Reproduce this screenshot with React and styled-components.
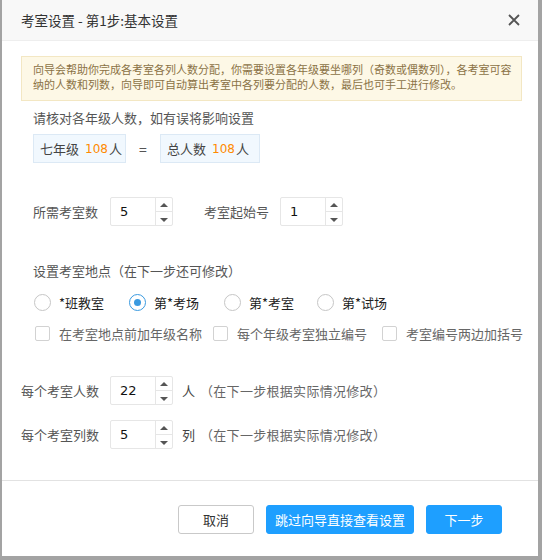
import React, { useState } from 'react';
import styled, { createGlobalStyle, css } from 'styled-components';

const GlobalStyle = createGlobalStyle`
  html, body {
    margin: 0;
    padding: 0;
    background: #a3a3a3;
  }
  body {
    font-family: "Microsoft YaHei", "Noto Sans CJK SC", "Noto Sans", sans-serif;
    color: #333;
  }
`;

const Dialog = styled.div`
  margin-left: 2px;
  width: 536px;
  height: 556px;
  background: #fff;
  display: flex;
  flex-direction: column;
  box-sizing: border-box;
`;

const Header = styled.div`
  height: 41px;
  flex: none;
  box-sizing: border-box;
  display: flex;
  align-items: center;
  justify-content: space-between;
  padding: 0 12px 0 19px;
  background: #f8f8f8;
  border-bottom: 1px solid #eee;
  font-size: 13.5px;
  color: #333;
`;

const CloseButton = styled.button`
  width: 24px;
  height: 24px;
  border: none;
  background: none;
  padding: 0;
  display: flex;
  align-items: center;
  justify-content: center;
  cursor: pointer;
`;

const Body = styled.div`
  flex: 1;
  padding: 15px 16px 0 19px;
  border-bottom: 1px solid #e2e2e2;
`;

const Notice = styled.div`
  box-sizing: border-box;
  height: 45px;
  padding: 5px 4px 0 11px;
  background: #fdf8e6;
  border: 1px solid #f3e7c3;
  font-size: 11px;
  line-height: 15px;
  color: #8b7245;
`;

const Section = styled.div`
  padding-left: ${p => p.indent ?? 12}px;
  margin-top: ${p => p.gap || 0}px;
`;

const Caption = styled.div`
  font-size: 13px;
  line-height: 18px;
  color: #555;
`;

const GradeRow = styled.div`
  display: flex;
  align-items: center;
  margin-top: 7px;
`;

const GradeBox = styled.div`
  box-sizing: border-box;
  height: 29px;
  width: ${p => p.width}px;
  padding-left: 6px;
  display: flex;
  align-items: center;
  background: #f1f8fe;
  border: 1px solid #dce9f5;
  font-size: 13px;
  color: #444;
`;

const Count = styled.span`
  color: #ff8a00;
  font-family: "DejaVu Sans", sans-serif;
  font-size: 12px;
  margin: 0 1px 0 6px;
`;

const Equals = styled.span`
  width: 34px;
  text-align: center;
  font-size: 14px;
  color: #555;
`;

const FieldRow = styled.div`
  display: flex;
  align-items: center;
  height: 29px;
  margin-top: ${p => p.gap || 0}px;
`;

const FieldLabel = styled.span`
  font-size: 13px;
  color: #555;
  width: ${p => p.width}px;
  margin-left: ${p => p.offset || 0}px;
  flex: none;
`;

const SpinBox = styled.div`
  box-sizing: border-box;
  width: 63px;
  height: 29px;
  display: flex;
  border: 1px solid #e6e6e6;
  border-radius: 2px;
  flex: none;
`;

const SpinValue = styled.div`
  flex: 1;
  display: flex;
  align-items: center;
  padding-left: 9px;
  font-family: "DejaVu Sans", sans-serif;
  font-size: 13px;
  color: #111;
`;

const SpinArrows = styled.div`
  width: 16px;
  border-left: 1px solid #e6e6e6;
  display: flex;
  flex-direction: column;
`;

const Arrow = styled.div`
  flex: 1;
  display: flex;
  align-items: center;
  justify-content: center;
  ${p => p.down && css`border-top: 1px solid #e6e6e6;`}

  &::after {
    content: '';
    width: 0;
    height: 0;
    border-left: 4px solid transparent;
    border-right: 4px solid transparent;
    ${p => (p.down
      ? css`border-top: 4px solid #555; margin-top: 3px;`
      : css`border-bottom: 4px solid #555;`)}
  }
`;

const Unit = styled.span`
  font-size: 13px;
  color: #444;
  margin-left: 9px;
`;

const Hint = styled.span`
  font-size: 13px;
  color: #666;
  margin-left: 5px;
  letter-spacing: 0.3px;
`;

const OptionRow = styled.div`
  display: flex;
  align-items: center;
  height: ${p => p.height}px;
  margin-top: ${p => p.gap || 0}px;
`;

const Option = styled.label`
  display: flex;
  align-items: center;
  width: ${p => p.width}px;
  flex: none;
  font-size: 13px;
  color: ${p => (p.muted ? '#666' : '#222')};
  cursor: pointer;
`;

const RadioMark = styled.span`
  box-sizing: border-box;
  width: 17px;
  height: 17px;
  border-radius: 50%;
  border: 1px solid ${p => (p.checked ? '#3a9ae0' : '#c6c6c6')};
  margin: 0 8px 0 1px;
  display: flex;
  align-items: center;
  justify-content: center;

  &::after {
    content: '';
    width: 7px;
    height: 7px;
    border-radius: 50%;
    background: ${p => (p.checked ? '#3a9ae0' : 'transparent')};
  }
`;

const CheckMark = styled.span`
  box-sizing: border-box;
  width: 15px;
  height: 15px;
  border: 1px solid #d2d2d2;
  border-radius: 2px;
  margin: 0 9px 0 2px;
  flex: none;
`;

const Footer = styled.div`
  height: 75px;
  flex: none;
  display: flex;
  justify-content: flex-end;
  align-items: flex-start;
  gap: 12px;
  padding: 24px 36px 0 0;
  box-sizing: border-box;
`;

const Button = styled.button`
  box-sizing: border-box;
  height: 29px;
  padding: 0;
  width: ${p => p.width}px;
  border-radius: 3px;
  font-family: inherit;
  font-size: 13px;
  cursor: pointer;
  border: 1px solid ${p => (p.primary ? '#1e9fff' : '#c9c9c9')};
  background: ${p => (p.primary ? '#1e9fff' : '#fff')};
  color: ${p => (p.primary ? '#fff' : '#333')};
`;

const Spinner = ({ value }) => (
  <SpinBox>
    <SpinValue>{value}</SpinValue>
    <SpinArrows>
      <Arrow />
      <Arrow down />
    </SpinArrows>
  </SpinBox>
);

const places = ['*班教室', '第*考场', '第*考室', '第*试场'];
const placeWidths = [95, 95, 93, 80];

const extras = [
  ['在考室地点前加年级名称', 178],
  ['每个年级考室独立编号', 169],
  ['考室编号两边加括号', 150],
];

export default function App() {
  const [place, setPlace] = useState(1);

  return (
    <>
      <GlobalStyle />
      <Dialog>
        <Header>
          <span>考室设置 - 第1步:基本设置</span>
          <CloseButton aria-label="close">
            <svg width="12" height="12" viewBox="0 0 12 12">
              <path d="M1 1L11 11M11 1L1 11" stroke="#555" strokeWidth="1.8" />
            </svg>
          </CloseButton>
        </Header>

        <Body>
          <Notice>
            向导会帮助你完成各考室各列人数分配，你需要设置各年级要坐哪列（奇数或偶数列），各考室可容
            <br />
            纳的人数和列数，向导即可自动算出考室中各列要分配的人数，最后也可手工进行修改。
          </Notice>

          <Section gap={8}>
            <Caption>请核对各年级人数，如有误将影响设置</Caption>
            <GradeRow>
              <GradeBox width={93}>
                七年级<Count>108</Count>人
              </GradeBox>
              <Equals>=</Equals>
              <GradeBox width={100}>
                总人数<Count>108</Count>人
              </GradeBox>
            </GradeRow>
          </Section>

          <Section gap={34}>
            <FieldRow>
              <FieldLabel width={77}>所需考室数</FieldLabel>
              <Spinner value="5" />
              <FieldLabel width={76} offset={31}>考室起始号</FieldLabel>
              <Spinner value="1" />
            </FieldRow>
          </Section>

          <Section gap={36}>
            <Caption>设置考室地点（在下一步还可修改）</Caption>
            <OptionRow height={20} gap={12}>
              {places.map((name, i) => (
                <Option key={name} width={placeWidths[i]} onClick={() => setPlace(i)}>
                  <RadioMark checked={place === i} />
                  {name}
                </Option>
              ))}
            </OptionRow>
            <OptionRow height={20} gap={11}>
              {extras.map(([name, width]) => (
                <Option key={name} width={width} muted>
                  <CheckMark />
                  {name}
                </Option>
              ))}
            </OptionRow>
          </Section>

          <Section indent={0} gap={33}>
            <FieldRow>
              <FieldLabel width={89}>每个考室人数</FieldLabel>
              <Spinner value="22" />
              <Unit>人</Unit>
              <Hint>（在下一步根据实际情况修改）</Hint>
            </FieldRow>
            <FieldRow gap={15}>
              <FieldLabel width={89}>每个考室列数</FieldLabel>
              <Spinner value="5" />
              <Unit>列</Unit>
              <Hint>（在下一步根据实际情况修改）</Hint>
            </FieldRow>
          </Section>
        </Body>

        <Footer>
          <Button width={76}>取消</Button>
          <Button width={148} primary>跳过向导直接查看设置</Button>
          <Button width={76} primary>下一步</Button>
        </Footer>
      </Dialog>
    </>
  );
}
